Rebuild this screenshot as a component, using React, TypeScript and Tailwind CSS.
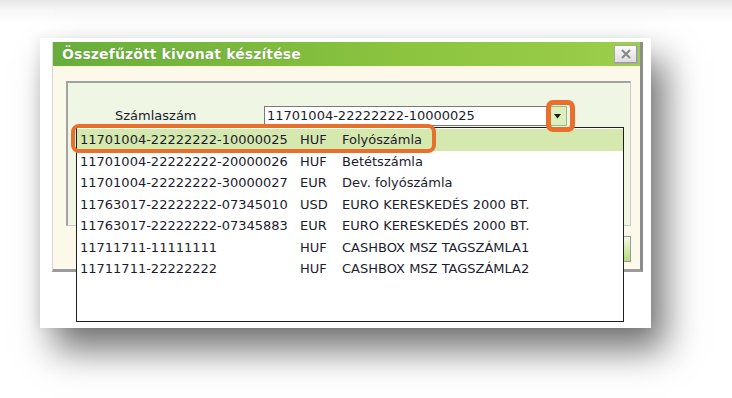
import React from "react";

const rows: [string, string, string][] = [
  ["11701004-22222222-10000025", "HUF", "Folyószámla"],
  ["11701004-22222222-20000026", "HUF", "Betétszámla"],
  ["11701004-22222222-30000027", "EUR", "Dev. folyószámla"],
  ["11763017-22222222-07345010", "USD", "EURO KERESKEDÉS 2000 BT."],
  ["11763017-22222222-07345883", "EUR", "EURO KERESKEDÉS 2000 BT."],
  ["11711711-11111111", "HUF", "CASHBOX MSZ TAGSZÁMLA1"],
  ["11711711-22222222", "HUF", "CASHBOX MSZ TAGSZÁMLA2"],
];

export default function App() {
  return (
    <div className="relative w-[732px] h-[398px] overflow-hidden bg-[linear-gradient(to_bottom,#e6e6e6_0px,#f7f7f7_10px,#ffffff_24px)] font-['DejaVu_Sans',Verdana,sans-serif] text-[13px] text-[#1c1c2e]">
      {/* screenshot card */}
      <div className="ml-[40px] mt-[38px] w-[611px] h-[290px] bg-white pt-[4px] pl-[12px] shadow-[-4px_0_10px_rgba(0,0,0,0.06),14px_22px_34px_rgba(0,0,0,0.55)]">
        {/* dialog */}
        <div className="w-[591px] h-[230px] flex flex-col bg-[#fdf9ea] border-l border-l-[#d8d8d8] border-r-[3px] border-r-[#8c8c8c] border-b-[3px] border-b-[#9a9a9a]">
          <div className="h-[26px] shrink-0 flex items-center justify-between pl-[9px] pr-[2px] bg-[linear-gradient(to_right,#68ad3c,#8cc43f_60%,#9cce4a)] border-b-2 border-b-[#fff6dc]">
            <span className="text-white font-bold text-[14px] tracking-[0.1px] [text-shadow:0_0_1px_rgba(40,80,20,0.6)]">
              Összefűzött kivonat készítése
            </span>
            <div className="w-[24px] h-[19px] flex items-center justify-center bg-[linear-gradient(to_bottom,#fafafa,#dcdcdc)] border border-[#a8a8a8] shadow-[inset_-1px_-1px_0_#9a9a9a]">
              <svg width="12" height="12" viewBox="0 0 12 12">
                <path d="M2 2 L10 10 M10 2 L2 10" stroke="#8a8a8a" strokeWidth="2.2" />
              </svg>
            </div>
          </div>
          <div className="pl-[13px] pt-[13px] flex flex-col">
            {/* inner panel */}
            <div className="w-[565px] h-[145px] bg-[#eff6e3] border-t-2 border-l-2 border-[#a3a3a3] border-r border-r-[#c8c8c8] border-b border-b-[#c8c8c8] pt-[23px]">
              <div className="flex items-center">
                <span className="w-[196px] pl-[47px]">Számlaszám</span>
                <div className="flex h-[20px]">
                  <div className="w-[284px] bg-white border border-[#7a7a7a] flex items-center pl-[2px]">
                    11701004-22222222-10000025
                  </div>
                  <div className="w-[19px] bg-[#dcefbf] border-y border-r border-[#9fb88a] flex items-center justify-center">
                    <svg width="7" height="5" viewBox="0 0 7 5">
                      <path d="M0 0 H7 L3.5 4.5 Z" fill="#1a1a1a" />
                    </svg>
                  </div>
                </div>
              </div>
            </div>
            <div className="flex justify-end w-[565px] mt-[10px]">
              <div className="w-[80px] h-[26px] border border-[#9a9a9a] bg-[linear-gradient(to_bottom,#f4f9ea,#b6dc7a)]" />
            </div>
          </div>
        </div>
      </div>

      {/* dropdown list */}
      <div className="absolute left-[76px] top-[127px] w-[548px] h-[195px] bg-white border border-[#1e1e1e] pt-[1px]">
        {rows.map((r, i) => (
          <div
            key={r[0]}
            className={
              "h-[21.5px] flex items-center pl-[3px] " +
              (i === 0 ? "bg-[#d5e8ad]" : "")
            }
          >
            <span className="w-[220px]">{r[0]}</span>
            <span className="w-[42px]">{r[1]}</span>
            <span>{r[2]}</span>
          </div>
        ))}
      </div>

      {/* highlight rings */}
      <div className="absolute left-[71px] top-[124px] w-[365px] h-[29px] border-[4px] border-[#e8702c] rounded-[8px]" />
      <div className="absolute left-[546px] top-[100px] w-[29px] h-[32px] border-[5px] border-[#e8702c] rounded-[7px]" />
    </div>
  );
}
